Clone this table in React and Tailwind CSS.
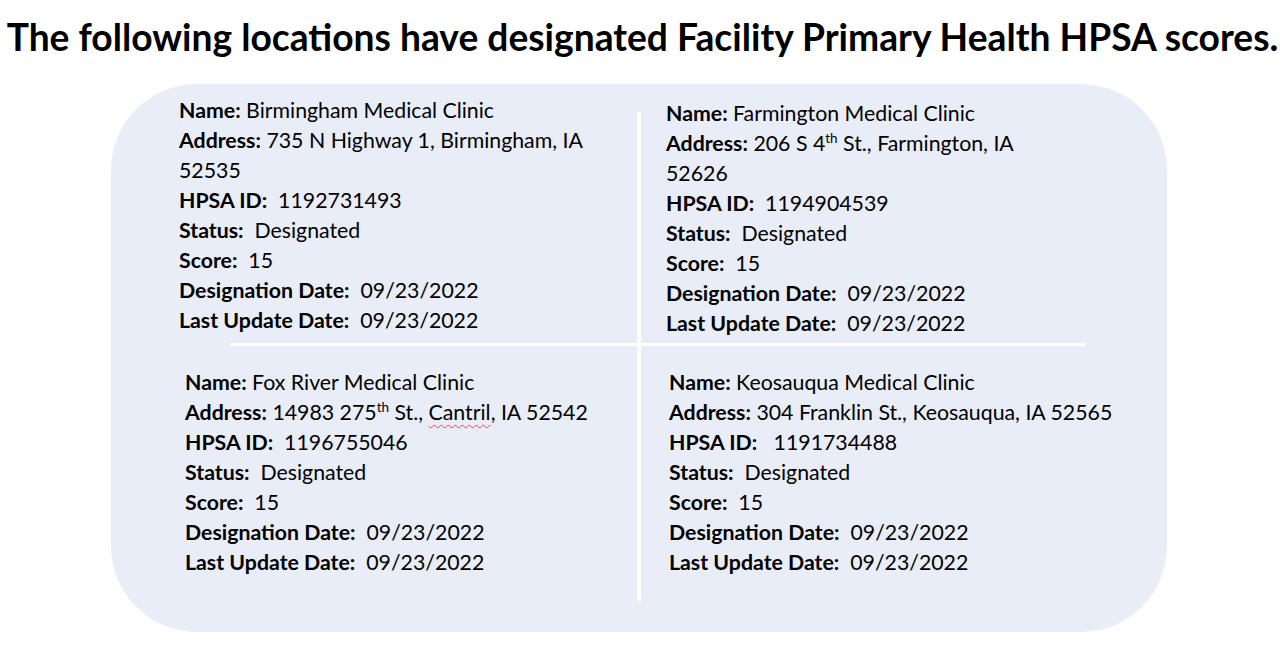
import React from "react";

const font = { fontFamily: "Lato, 'Noto Sans', sans-serif" };

function Line({ label, children }) {
  return (
    <div className="whitespace-pre leading-[30px]">
      <span className="font-bold">{label}</span>
      {children}
    </div>
  );
}

function Block({ lines, className }) {
  return (
    <div className={"text-[21.3px] text-black " + className}>
      {lines.map((l, i) => (
        <Line key={i} label={l[0]}>
          {l[1]}
        </Line>
      ))}
    </div>
  );
}

const common = [
  ["Status:", "  Designated"],
  ["Score:", "  15"],
  ["Designation Date:", "  09/23/2022"],
  ["Last Update Date:", "  09/23/2022"],
];

export default function App() {
  return (
    <div className="w-[1285px] h-[648px] bg-white overflow-hidden" style={font}>
      <h1 className="text-center whitespace-nowrap font-bold text-[37.2px] leading-[40px] pt-[17px] text-black">
        The following locations have designated Facility Primary Health HPSA scores.
      </h1>
      <div className="ml-[111px] mt-[27px] w-[1056px] h-[548px] bg-[#e9edf7] rounded-[86px] grid grid-cols-[526px_4px_526px] grid-rows-[259px_3px_286px]">
        <Block
          className="col-start-1 row-start-1 pl-[68px] pt-[11px]"
          lines={[
            ["Name:", " Birmingham Medical Clinic"],
            ["Address:", " 735 N Highway 1, Birmingham, IA"],
            ["", "52535"],
            ["HPSA ID:", "  1192731493"],
            ...common,
          ]}
        />
        <Block
          className="col-start-3 row-start-1 pl-[25px] pt-[14px]"
          lines={[
            ["Name:", " Farmington Medical Clinic"],
            [
              "Address:",
              <>
                {" 206 S 4"}
                <sup className="text-[13.5px] -top-[8px]">th</sup>
                {" St., Farmington, IA"}
              </>,
            ],
            ["", "52626"],
            ["HPSA ID:", "  1194904539"],
            ...common,
          ]}
        />
        <div className="col-start-2 row-start-1 row-span-3 bg-white mt-[28px] mb-[31px]" />
        <div className="col-start-1 col-span-3 row-start-2 bg-white ml-[119px] mr-[82px]" />
        <Block
          className="col-start-1 row-start-3 pl-[74px] pt-[21px]"
          lines={[
            ["Name:", " Fox River Medical Clinic"],
            [
              "Address:",
              <>
                {" 14983 275"}
                <sup className="text-[13.5px] -top-[8px]">th</sup>
                {" St., "}
                <span className="underline decoration-wavy decoration-[#e05050] decoration-1 underline-offset-[4px]">
                  Cantril
                </span>
                {", IA 52542"}
              </>,
            ],
            ["HPSA ID:", "  1196755046"],
            ...common,
          ]}
        />
        <Block
          className="col-start-3 row-start-3 pl-[28px] pt-[21px]"
          lines={[
            ["Name:", " Keosauqua Medical Clinic"],
            ["Address:", " 304 Franklin St., Keosauqua, IA 52565"],
            ["HPSA ID:", "   1191734488"],
            ...common,
          ]}
        />
      </div>
    </div>
  );
}
